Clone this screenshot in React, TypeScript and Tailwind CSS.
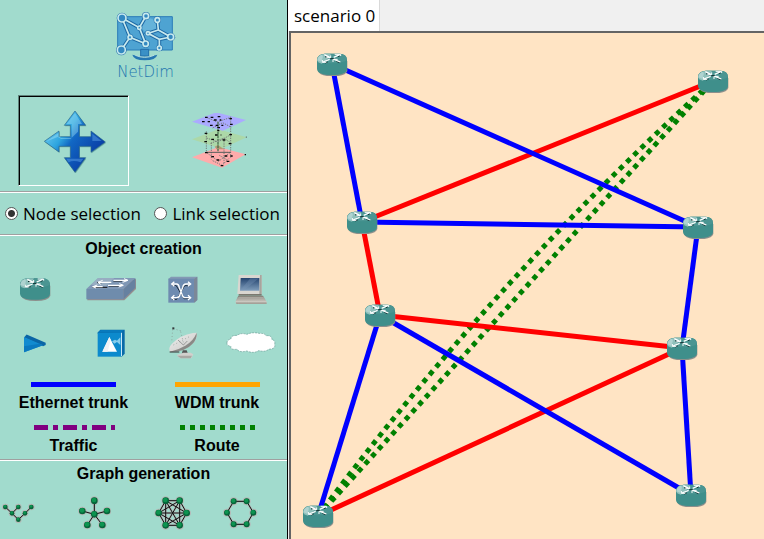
import { useState, type ReactNode } from "react";

function RouterShape() {
  return (
    <g>
      <path d="M63 62V90Q68 106 107 106Q146 106 151 90V60Z" fill="#8d8f8c" />
      <path d="M60 56Q60 48 68 43Q74 38 84 38H128Q138 38 144 43Q150 48 150 56V84Q148 102 105 102Q62 102 60 84Z" fill="#3f8f8b" />
      <path d="M60 56Q62 38 84 38H128Q148 39 150 56Q142 66 105 67Q68 66 60 56Z" fill="#4b9592" />
      <path d="M61 58Q60 40 84 38H102Q94 56 74 68Q62 66 61 58Z" fill="#8fc0bb" />
      <path d="M61 58Q62 46 74 41Q82 44 72 62Z" fill="#bcdcd8" opacity=".7" />
      <g stroke="#0d2b2b" strokeWidth="3" fill="none">
        <path d="M99 53H111M84 47L92 50M118 61L128 65M84 66L92 63M122 47L128 45" />
      </g>
      <g stroke="#fff" strokeWidth="4" fill="none">
        <path d="M82 41L100 50M110 49L128 41M78 63L98 55M111 55L130 63" />
        <path d="M88 50H101V43M113 40H131V45M76 57V64H88M108 63V55H122" strokeWidth="3" />
      </g>
    </g>
  );
}

function RouterIcon() {
  return (
    <svg viewBox="60 37 93 69" width="31" height="23">
      <RouterShape />
    </svg>
  );
}

function SwitchIcon() {
  return (
    <svg viewBox="260 36 150 72" width="50" height="24">
      <path d="M264 74V106H375L410 72V42Z" fill="#968e8e" />
      <path d="M261 72L296 39H408L373 72Z" fill="#7f97b5" />
      <path d="M275 59L296 39H345L320 64Z" fill="#a9bccb" opacity=".6" />
      <path d="M261 72H373V103H261Z" fill="#6f8cac" />
      <path d="M373 72L408 39V68L373 103Z" fill="#6681a0" />
      <g stroke="#151515" strokeWidth="3" fill="none">
        <path d="M294 53H308M342 48H368M280 67H324M328 63H360" />
      </g>
      <g stroke="#fff" strokeWidth="4" fill="none">
        <path d="M296 52H336M342 46H384M280 65H310M326 61H370" />
        <path d="M310 46L296 52L304 58M374 41L386 46L370 52M294 60L280 65L290 69M360 56L372 61L358 66" strokeWidth="3" />
      </g>
    </svg>
  );
}

function CrossConnectIcon() {
  return (
    <svg viewBox="68 31 90 81" width="30" height="27">
      <path d="M69 40L77 33H156V103L148 111Z" fill="#8499b4" />
      <path d="M146 40L156 33V103L146 111Z" fill="#7c8798" />
      <path d="M69 39H146V111H69Z" fill="#6e8bb0" />
      <g fill="none" stroke="#1d2b3c" strokeWidth="3">
        <path d="M80 59H92L116 99H134M80 101H94L118 60H134" />
      </g>
      <g fill="none" stroke="#fff" strokeWidth="4">
        <path d="M80 55H94Q100 55 102 66L110 86Q112 96 122 96H134M80 96H94Q102 96 104 86L112 66Q114 55 122 55H134" />
        <path d="M87 48L79 55L87 62M87 89L79 96L87 103M128 48L136 55L128 62M128 89L136 96L128 103" />
      </g>
    </svg>
  );
}

function ComputerIcon() {
  return (
    <svg viewBox="274 27 96 93" width="32" height="31">
      <defs>
        <linearGradient id="screen" x1="0" y1="0" x2="0" y2="1">
          <stop offset="0" stopColor="#24446f" />
          <stop offset="1" stopColor="#7f9dbb" />
        </linearGradient>
        <linearGradient id="keys" x1="0" y1="0" x2="0" y2="1">
          <stop offset="0" stopColor="#77746c" />
          <stop offset="1" stopColor="#e0ddd6" />
        </linearGradient>
      </defs>
      <path d="M285 30H354V87H281Z" fill="#d9d6d0" />
      <path d="M349 30H354V87H347Z" fill="#a8a49d" />
      <path d="M291 39H347V77H289Z" fill="url(#screen)" />
      <path d="M320 40H346L300 76H290Z" fill="#7796b8" opacity=".35" />
      <path d="M285 87H354V92H285Z" fill="#7b786f" />
      <path d="M284 92H358L369 110V114H276V108Z" fill="url(#keys)" />
      <path d="M276 112H369V117H278Z" fill="#a5a098" />
      <path d="M284 97H360M281 102H363" stroke="#c1bdb5" strokeWidth="2" />
    </svg>
  );
}

function RegeneratorIcon() {
  return (
    <svg viewBox="72 203 70 57" width="23" height="19">
      <path d="M72 213L80 204L138 229V236L130 240Z" fill="#0a65a5" />
      <path d="M72 212L130 237L72 258Z" fill="#128bd0" />
      <path d="M72 240L120 232L130 237L72 258Z" fill="#0b79bf" />
    </svg>
  );
}

function SplitterIcon() {
  return (
    <svg viewBox="292 190 84 84" width="28" height="28">
      <path d="M293 202L302 192H375V264L366 273Z" fill="#0869a8" />
      <path d="M296 199L303 193H372L364 201Z" fill="#087abd" />
      <path d="M294 201H364V273H294Z" fill="#0c8acd" />
      <path d="M364 201H367V271H364Z" fill="#c9e8f7" />
      <path d="M337 227L346 222L352 225L362 215V238L352 229L344 234Z" fill="#86cdec" />
      <path d="M329 214L352 258H308Z" fill="#fff" />
      <path d="M329 214L333 222L324 258H308Z" fill="#f0f2f5" />
    </svg>
  );
}

function AntennaIcon() {
  return (
    <svg viewBox="67 187 93 102" width="31" height="34">
      <defs>
        <linearGradient id="dish" x1="0" y1="0" x2="1" y2="1">
          <stop offset="0" stopColor="#efefef" />
          <stop offset=".6" stopColor="#d8d7d5" />
          <stop offset="1" stopColor="#777" />
        </linearGradient>
      </defs>
      <path d="M114 260H126L132 276H110Z" fill="#555" />
      <path d="M96 274L116 267H138L146 272L140 284H106Z" fill="#d2d0cd" />
      <path d="M98 276H142L138 284H108Z" fill="#aaa8a4" />
      <path d="M76 264Q70 252 82 240Q108 214 145 208L156 207Q160 225 142 242Q122 265 76 264Z" fill="url(#dish)" />
      <path d="M76 264Q122 265 142 242Q158 225 156 207Q146 232 122 246Q100 259 76 264Z" fill="#8a8986" />
      <path d="M86 195L110 202M84 197L81 236M108 204L118 244M86 244L134 219" fill="none" stroke="#85908c" strokeWidth="2" strokeDasharray="3 7" />
      <path d="M83 191H89V197H83Z" fill="#33383a" />
      <path d="M100 229L116 244L128 232" fill="none" stroke="#999" strokeWidth="3" />
      <path d="M75 265H104" stroke="#333" strokeWidth="3" />
    </svg>
  );
}

function CloudIcon() {
  return (
    <svg viewBox="243 207 151 66" width="50" height="22">
      <path
        d="M246 240Q245 231 258 228Q256 217 276 217Q290 208 306 214Q322 206 344 211Q360 210 364 218Q382 216 382 230Q393 232 390 244Q394 258 372 259Q362 268 342 263Q326 273 306 264Q284 270 276 259Q254 261 258 250Q244 248 246 240Z"
        fill="#fff"
        stroke="#6c9c96"
        strokeWidth="2"
        strokeDasharray="6 3"
      />
    </svg>
  );
}

type Point = [number, number];

function GraphIcon({
  points,
  edges,
  viewBox,
  width,
  height,
  radius = 10,
}: {
  points: Point[];
  edges: Point[];
  viewBox: string;
  width: number;
  height: number;
  radius?: number;
}) {
  return (
    <svg viewBox={viewBox} width={width} height={height}>
      {points.map(([x, y], i) => (
        <circle key={i} cx={x} cy={y} r={radius + 3} fill="#b6b9b8" />
      ))}
      {edges.map(([a, b], i) => (
        <line key={i} x1={points[a][0]} y1={points[a][1]} x2={points[b][0]} y2={points[b][1]} stroke="#b3b9b7" strokeWidth="7" />
      ))}
      {edges.map(([a, b], i) => (
        <line key={i} x1={points[a][0]} y1={points[a][1]} x2={points[b][0]} y2={points[b][1]} stroke="#111" strokeWidth="3" />
      ))}
      {points.map(([x, y], i) => (
        <g key={i}>
          <circle cx={x} cy={y} r={radius} fill="#07653a" />
          <circle cx={x - 1} cy={y - 2} r={radius - 3} fill="#0d9450" />
        </g>
      ))}
    </svg>
  );
}

const hexagon: Point[] = [[75, 46], [117, 46], [138, 83], [117, 120], [75, 120], [54, 83]];
const meshEdges: Point[] = hexagon.flatMap((_, a) => hexagon.map((__, b): Point => [a, b]).filter(([p, q]) => p < q));

function LogoIcon() {
  const joints: [number, number, number][] = [
    [66, 54, 12], [138, 48, 8], [118, 83, 5], [90, 112, 6], [64, 150, 12], [137, 131, 8],
    [172, 60, 7], [144, 100, 5], [212, 111, 9], [178, 144, 6],
  ];
  const wires =
    "M66 54L118 83L138 48M118 83L137 131L90 112L66 54M90 112L64 150M172 60L175 90L144 100L178 118L212 111L175 90M178 118V144";
  return (
    <svg viewBox="48 33 180 153" width="60" height="51">
      <path d="M53 50H217V150H53Z" fill="#4ea3d2" stroke="#2b7cb8" strokeWidth="3" />
      <path d="M120 80L138 50L170 62V92L142 102Z" fill="#65b3da" />
      <path d="M122 148H146V168H122Z" fill="#3a90c6" stroke="#226ea9" strokeWidth="3" />
      <path d="M97 164Q134 176 172 164Q168 181 134 181Q101 181 97 164Z" fill="#2577b2" />
      <path d="M106 166Q134 178 162 166" fill="none" stroke="#b7dedf" strokeWidth="3" />
      <path d={wires} fill="none" stroke="#1c68a4" strokeWidth="11" />
      {joints.map(([x, y, r], i) => (
        <circle key={i} cx={x} cy={y} r={r + 4} fill="#1f6ca8" />
      ))}
      <path d={wires} fill="none" stroke="#c7e9ee" strokeWidth="5" />
      {joints.map(([x, y, r], i) => (
        <circle key={i} cx={x} cy={y} r={r} fill="#3489c1" stroke="#c7e9ee" strokeWidth="5" />
      ))}
    </svg>
  );
}

function MoveIcon() {
  const arrows =
    "M195 70L227 113H208V147H243V130L286 163L243 194V176H208V210H227L195 254L163 210H181V176H147V193L103 161L147 130V147H181V113H163Z";
  return (
    <svg viewBox="96 64 192 192" width="64" height="64">
      <defs>
        <linearGradient id="arrowBlue" x1="0" y1="0.1" x2="0.9" y2="0.8">
          <stop offset="0" stopColor="#8fdcf5" />
          <stop offset=".38" stopColor="#2ea5df" />
          <stop offset=".52" stopColor="#1268c4" />
          <stop offset="1" stopColor="#0736a0" />
        </linearGradient>
      </defs>
      <path d={arrows} fill="#4d8c8c" opacity=".6" transform="translate(2 3)" />
      <path d={arrows} fill="url(#arrowBlue)" stroke="#28658b" strokeWidth="2" />
      <path d="M195 76L216 109H204V132L181 154H151V145L110 161L146 136V151H185V109H170Z" fill="#b7edfa" opacity=".35" />
      <path d="M247 138L275 160H247ZM169 213H220L212 224Q190 216 176 224Z" fill="#4d91dc" opacity=".6" />
    </svg>
  );
}

function LayersIcon() {
  return (
    <svg viewBox="36 33 168 168" width="56" height="56">
      <path d="M115 135L197 157L126 197L36 166Z" fill="#ffabab" />
      <path d="M115 82L200 106L125 140L36 112Z" fill="#acd8a8" />
      <path d="M108 31L198 54L128 86L36 59Z" fill="#abaaff" />
      <path d="M104 134L114 129L132 142H110Z" fill="#b59873" />
      <path d="M114 60V150" stroke="#47724c" strokeWidth="4" strokeDasharray="8 2" />
      <g fill="none" stroke="#777f7c" strokeWidth="3" strokeDasharray="4 3">
        <path d="M79 88V150M152 44V168M94 122V172M132 110V184M79 46L112 60L152 46M98 78L128 62L154 76M80 108L114 120L152 98M92 124L132 108L156 126M80 152L116 178L152 150M98 176L126 190L148 168M118 160L142 174" />
      </g>
      <path d="M78 151H152" stroke="#555c59" strokeWidth="3" />
      <g stroke="#090909" strokeWidth="4" strokeDasharray="8 9">
        <path d="M75 46H100M113 44H128M66 59H90M102 54H124M148 50H160M90 70H130M150 67H158M112 77H120" />
        <path d="M74 94H86M105 99H124M148 98H158M73 119H84M94 112H110M128 114H142M146 125H160M112 86H118" />
        <path d="M75 152H84M94 164H106M110 174H124M134 162H158M122 191H130M140 178H150M194 158H198" />
      </g>
      <path d="M199 103V108" stroke="#69807a" strokeWidth="3" />
    </svg>
  );
}

function Separator() {
  return <hr className="h-[2px] border-t border-b border-t-[#a0a0a0] border-b-white" />;
}

function SectionTitle({ children }: { children: ReactNode }) {
  return <h2 className="pt-px text-center font-['Liberation_Sans',sans-serif] text-base leading-6 font-bold">{children}</h2>;
}

const objects: { name: string; icon: ReactNode }[] = [
  { name: "Router", icon: <RouterIcon /> },
  { name: "Switch", icon: <SwitchIcon /> },
  { name: "Cross connect", icon: <CrossConnectIcon /> },
  { name: "Host", icon: <ComputerIcon /> },
  { name: "Regenerator", icon: <RegeneratorIcon /> },
  { name: "Splitter", icon: <SplitterIcon /> },
  { name: "Antenna", icon: <AntennaIcon /> },
  { name: "Cloud", icon: <CloudIcon /> },
];

const linkTypes = [
  { name: "Ethernet trunk", color: "#0000ff", from: 0, to: 85, dash: undefined },
  { name: "WDM trunk", color: "#ffa500", from: 0, to: 85, dash: undefined },
  { name: "Traffic", color: "#800080", from: 3, to: 84, dash: "14 5 5 5" },
  { name: "Route", color: "#008000", from: 5, to: 81, dash: "5 5" },
];

const graphs: { name: string; icon: ReactNode }[] = [
  {
    name: "Tree",
    icon: (
      <GraphIcon
        viewBox="6 50 99 60"
        width={33}
        height={20}
        radius={7}
        points={[[55, 100], [36, 81], [75, 81], [16, 62], [55, 62], [94, 62]]}
        edges={[[0, 1], [0, 2], [1, 3], [1, 4], [2, 5]]}
      />
    ),
  },
  {
    name: "Star",
    icon: (
      <GraphIcon
        viewBox="234 30 99 102"
        width={33}
        height={34}
        points={[[283, 85], [283, 44], [321, 75], [307, 117], [262, 117], [247, 75]]}
        edges={[[0, 1], [0, 2], [0, 3], [0, 4], [0, 5]]}
      />
    ),
  },
  {
    name: "Full mesh",
    icon: <GraphIcon viewBox="40 32 111 102" width={37} height={34} points={hexagon} edges={meshEdges} />,
  },
  {
    name: "Ring",
    icon: (
      <GraphIcon
        viewBox="246 30 108 102"
        width={36}
        height={34}
        radius={9}
        points={[[281, 46], [320, 46], [340, 80], [320, 115], [281, 115], [261, 80]]}
        edges={[[0, 1], [1, 2], [2, 3], [3, 4], [4, 5], [5, 0]]}
      />
    ),
  },
];

const nodes: Point[] = [[41, 31], [422, 48], [71, 189], [407, 194], [89, 282], [391, 315], [400, 462], [27, 483]];
const blueLinks: Point[] = [[0, 2], [0, 3], [2, 3], [3, 5], [4, 7], [4, 6], [5, 6]];
const redLinks: Point[] = [[1, 2], [2, 4], [4, 5], [5, 7]];

function Links({ links, color }: { links: Point[]; color: string }) {
  return (
    <g stroke={color} strokeWidth="5">
      {links.map(([a, b]) => (
        <line key={`${a}-${b}`} x1={nodes[a][0]} y1={nodes[a][1]} x2={nodes[b][0]} y2={nodes[b][1]} />
      ))}
    </g>
  );
}

function NetworkCanvas() {
  return (
    <svg className="block h-full w-full" role="img" aria-label="Network topology">
      <g fill="none" stroke="#008000" strokeWidth="5" strokeDasharray="5 5">
        <path d="M27 483Q203 246 422 48" />
        <path d="M27 483L422 48" />
      </g>
      <Links links={redLinks} color="#ff0000" />
      <Links links={blueLinks} color="#0000ff" />
      {nodes.map(([x, y], i) => (
        <svg key={i} x={x - 15} y={y - 11} width="31" height="23" viewBox="60 36 93 69">
          <RouterShape />
        </svg>
      ))}
    </svg>
  );
}

function SelectionRadio({ label, checked, onSelect }: { label: string; checked: boolean; onSelect: () => void }) {
  return (
    <label className="flex items-center gap-[5px] whitespace-nowrap">
      <input
        type="radio"
        name="selection"
        checked={checked}
        onChange={onSelect}
        className="size-[13px] shrink-0 appearance-none rounded-full border border-[#555] bg-white checked:bg-[radial-gradient(circle,#333_0_3px,#fff_4px)]"
      />
      {label}
    </label>
  );
}

export default function App() {
  const [selection, setSelection] = useState("node");
  const [mode, setMode] = useState("move");
  const toolClass = "flex h-[91px] w-[111px] items-center justify-center border";
  const pressed = "border-t-[#5f827a] border-l-[#5f827a] border-r-white border-b-white shadow-[inset_1px_1px_0_#000]";

  return (
    <div className="flex min-h-screen bg-[#f0f0f0] font-['Open_Sans',sans-serif] text-[17px] text-black">
      <aside className="w-[288px] shrink-0 border-r border-black bg-[#a1dbcd]">
        <div className="flex flex-col items-center pt-[11px] pb-[13px] pl-1">
          <LogoIcon />
          <span className="font-['DejaVu_Sans',sans-serif] text-[15px] leading-5 font-extralight text-[#2274ae]">NetDim</span>
        </div>
        <div className="flex gap-[35px] pb-[5px] pl-[18px]">
          <button
            type="button"
            aria-label="Move"
            onClick={() => setMode("move")}
            className={`${toolClass} ${mode === "move" ? pressed : "border-transparent"}`}
          >
            <MoveIcon />
          </button>
          <button
            type="button"
            aria-label="Layers"
            onClick={() => setMode("layers")}
            className={`${toolClass} ${mode === "layers" ? pressed : "border-transparent"}`}
          >
            <LayersIcon />
          </button>
        </div>
        <Separator />
        <div className="flex h-[41px] items-center justify-between pr-[7px] pl-[5px]">
          <SelectionRadio label="Node selection" checked={selection === "node"} onSelect={() => setSelection("node")} />
          <SelectionRadio label="Link selection" checked={selection === "link"} onSelect={() => setSelection("link")} />
        </div>
        <Separator />
        <section>
          <SectionTitle>Object creation</SectionTitle>
          <div className="grid grid-cols-[71fr_80fr_63fr_73fr] pt-px">
            {objects.map(({ name, icon }) => (
              <button key={name} type="button" aria-label={name} className="flex h-[54px] items-center justify-center">
                {icon}
              </button>
            ))}
          </div>
          <div className="grid grid-cols-[147fr_140fr] pb-[3px] font-['Liberation_Sans',sans-serif] text-base leading-5 font-bold">
            {linkTypes.map(({ name, color, from, to, dash }) => (
              <button key={name} type="button" className="flex flex-col items-center gap-[6px] pt-3">
                <svg width="85" height="5">
                  <line x1={from} y1="2.5" x2={to} y2="2.5" stroke={color} strokeWidth="5" strokeDasharray={dash} />
                </svg>
                {name}
              </button>
            ))}
          </div>
        </section>
        <Separator />
        <section>
          <SectionTitle>Graph generation</SectionTitle>
          <div className="grid grid-cols-[77fr_76fr_69fr_65fr] pl-[2px]">
            {graphs.map(({ name, icon }) => (
              <button key={name} type="button" aria-label={name} className="flex h-[53px] items-center justify-start">
                {icon}
              </button>
            ))}
          </div>
        </section>
      </aside>
      <main className="flex min-w-0 flex-1 flex-col">
        <div role="tablist" className="flex h-[31px]">
          <button
            type="button"
            role="tab"
            aria-selected="true"
            className="border-r border-[#d9d9d9] bg-white pr-1 pl-[6px] leading-[30px]"
          >
            scenario 0
          </button>
        </div>
        <div className="ml-px min-h-0 flex-1 border-t-2 border-l-2 border-[#646464] bg-[#ffe4c4]">
          <NetworkCanvas />
        </div>
      </main>
    </div>
  );
}
